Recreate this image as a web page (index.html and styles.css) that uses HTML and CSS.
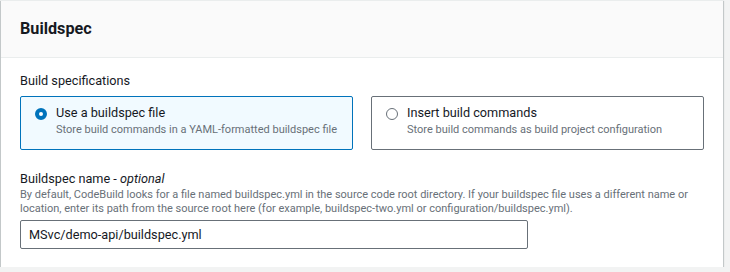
FILE: index.html
```html
<!DOCTYPE html>
<html lang="en">
<head>
    <meta charset="UTF-8">
    <title>Buildspec</title>
    <link rel="stylesheet" href="styles.css">
</head>
<body>
    <div class="container">
        <div class="container-header">
            <h2>Buildspec</h2>
        </div>

        <div class="container-body">
            <div class="field-label">Build specifications</div>

            <div class="tiles">
                <label class="tile tile-selected">
                    <span class="radio radio-checked"></span>
                    <span class="tile-text">
                        <span class="tile-title">Use a buildspec file</span>
                        <span class="tile-desc">Store build commands in a YAML-formatted buildspec file</span>
                    </span>
                </label>
                <label class="tile">
                    <span class="radio"></span>
                    <span class="tile-text">
                        <span class="tile-title">Insert build commands</span>
                        <span class="tile-desc">Store build commands as build project configuration</span>
                    </span>
                </label>
            </div>

            <div class="form-field">
                <div class="field-label">Buildspec name - <i>optional</i></div>
                <p class="field-desc">By default, CodeBuild looks for a file named buildspec.yml in the source code root directory. If your buildspec file uses a different name or location, enter its path from the source root here (for example, buildspec-two.yml or configuration/buildspec.yml).</p>
                <input type="text" class="text-input" value="MSvc/demo-api/buildspec.yml">
            </div>
        </div>
    </div>
</body>
</html>
```

FILE: styles.css
```css
* {
    margin: 0;
    padding: 0;
    box-sizing: border-box;
}

body {
    font-family: Roboto, "Liberation Sans", Arial, sans-serif;
    background: #f2f3f3;
    color: #16191f;
    font-size: 12.7px;
    line-height: 18px;
}

.container {
    margin-left: 1px;
    width: 722px;
    background: white;
    border-top: 1px solid #eaeded;
    box-shadow: 0 1px 1px 0 rgba(0, 28, 36, 0.3),
                1px 1px 1px 0 rgba(0, 28, 36, 0.15),
                -1px 1px 1px 0 rgba(0, 28, 36, 0.15);
}

.container-header {
    background: #fafafa;
    padding: 18px 19px;
    border-bottom: 1px solid #eaeded;
}

.container-header h2 {
    font-size: 16.2px;
    line-height: 20px;
    font-weight: 700;
}

.container-body {
    padding: 14px 19px 18px;
}

.field-label {
    color: #16191f;
}

.tiles {
    display: grid;
    grid-template-columns: 1fr 1fr;
    gap: 18px;
    margin-top: 6px;
}

.tile {
    display: flex;
    align-items: flex-start;
    gap: 9px;
    padding: 7px 14px 11px;
    border: 1px solid #687078;
    border-radius: 2px;
    background: white;
}

.tile-selected {
    border-color: #0073bb;
    background: #f1faff;
}

.radio {
    flex: none;
    width: 12px;
    height: 12px;
    margin-top: 4px;
    border: 1px solid #687078;
    border-radius: 50%;
    background: white;
}

.radio-checked {
    border: 4px solid #0073bb;
}

.tile-text {
    display: flex;
    flex-direction: column;
}

.tile-desc {
    font-size: 11px;
    line-height: 16px;
    color: #687078;
}

.form-field {
    margin-top: 20px;
}

.field-desc {
    font-size: 11px;
    line-height: 14px;
    color: #687078;
}

.text-input {
    display: block;
    margin-top: 4px;
    width: 508px;
    height: 29px;
    padding: 0 8px;
    border: 1px solid #687078;
    border-radius: 2px;
    font-family: inherit;
    font-size: 12.7px;
    color: #16191f;
    background: white;
}
```
